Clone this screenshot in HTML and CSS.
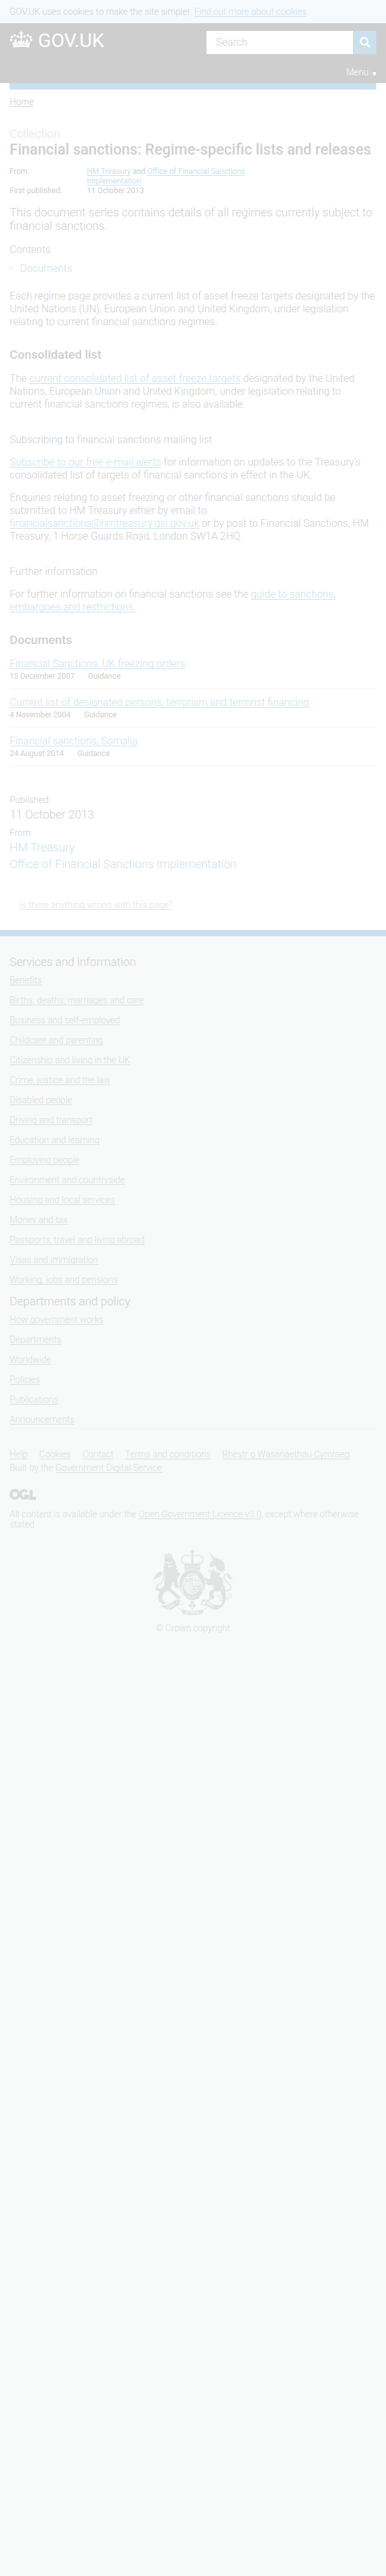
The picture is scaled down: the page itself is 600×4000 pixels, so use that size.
FILE: index.html
```html
<!DOCTYPE html>
<html lang="en">
<head>
<meta charset="utf-8">
<meta name="viewport" content="width=device-width, initial-scale=1">
<title>Financial sanctions: Regime-specific lists and releases - GOV.UK</title>
<link rel="stylesheet" href="styles.css">
</head>
<body>
<div class="cookie-bar">GOV.UK uses cookies to make the site simpler. <a href="#">Find out more about cookies</a></div>

<header class="site-header">
  <div class="header-row">
    <a class="logo" href="#">
      <svg class="crown" viewBox="0 0 108 80" aria-hidden="true">
        <g fill="currentColor">
          <path d="M51 2h6v6h6v6h-6v4l4 12-4 8h-6l-4-8 4-12v-4h-6V8h6z"/>
          <circle cx="38" cy="27" r="6"/><circle cx="70" cy="27" r="6"/>
          <circle cx="23" cy="21" r="6"/><circle cx="85" cy="21" r="6"/>
          <circle cx="10" cy="29" r="6"/><circle cx="98" cy="29" r="6"/>
          <circle cx="6" cy="43" r="6"/><circle cx="102" cy="43" r="6"/>
          <path d="M10 49l9 10 4-6-4-5 8-7 6 8-3 6 5 3 6-3-4-5 6-5 4 5h14l4-5 6 5-4 5 6 3 5-3-3-6 6-8 8 7-4 5 4 6 9-10-7 30Q54 74 17 79z"/>
          <rect x="25" y="38" width="5" height="22"/><rect x="51" y="40" width="6" height="20"/><rect x="78" y="38" width="5" height="22"/>
        </g>
        <path d="M21 68Q54 63 87 68" fill="none" stroke="#cecece" stroke-width="2"/>
        <path d="M35 63l5-3 4 3zM64 63l4-3 5 3z" fill="#cecece"/>
      </svg>
      <span>GOV.UK</span>
    </a>
    <form class="search" role="search">
      <input type="search" aria-label="Search" placeholder="Search">
      <button type="submit" aria-label="Search">
        <svg viewBox="0 0 18 18" aria-hidden="true"><circle cx="7" cy="7" r="5.5" fill="none" stroke="currentColor" stroke-width="2.5"/><path d="M11 11l5 5" stroke="currentColor" stroke-width="3"/></svg>
      </button>
    </form>
  </div>
  <a class="menu" href="#">Menu <svg viewBox="0 0 6 6" aria-hidden="true"><path d="M0 0h6L3.500 6h-1z" fill="currentColor"/></svg></a>
</header>

<main class="page">
  <div class="bar"></div>
  <nav class="crumbs" aria-label="Breadcrumb"><a href="#">Home</a></nav>

  <p class="kind">Collection</p>
  <h1>Financial sanctions: Regime-specific lists and releases</h1>
  <dl class="meta">
    <dt>From:</dt><dd><a href="#">HM Treasury</a> and <a href="#">Office of Financial Sanctions Implementation</a></dd>
    <dt>First published:</dt><dd>11 October 2013</dd>
  </dl>
  <p class="lead">This document series contains details of all regimes currently subject to financial sanctions.</p>

  <nav class="contents" aria-labelledby="contents-title">
    <h2 id="contents-title">Contents</h2>
    <ul><li><a href="#documents">Documents</a></li></ul>
  </nav>

  <section class="prose">
    <p>Each regime page provides a current list of asset freeze targets designated by the United Nations (UN), European Union and United Kingdom, under legislation relating to current financial sanctions regimes.</p>
    <h2>Consolidated list</h2>
    <p>The <a href="#">current consolidated list of asset freeze targets</a> designated by the United Nations, European Union and United Kingdom, under legislation relating to current&nbsp;financial sanctions regimes, is also available.</p>
    <h3>Subscribing to financial sanctions mailing list</h3>
    <p><a href="#">Subscribe to our free e-mail alerts</a> for information on updates to the Treasury’s consolidated list of targets of financial sanctions in effect in the UK.</p>
    <p>Enquiries relating to asset freezing or other financial sanctions should be submitted to HM Treasury either by email to <a href="#">financialsanctions@hmtreasury.gsi.gov.uk</a> or by post to Financial Sanctions, HM Treasury, 1 Horse Guards Road, London SW1A 2HQ.</p>
    <h3>Further information</h3>
    <p>For further information on financial sanctions see the <a href="#">guide to sanctions, embargoes and restrictions.</a></p>
    <h2 id="documents">Documents</h2>
  </section>

  <ol class="docs">
    <li><a href="#">Financial Sanctions, UK freezing orders</a><div class="doc-meta"><span>15 December 2007</span><span>Guidance</span></div></li>
    <li><a href="#">Current list of designated persons, terrorism and terrorist financing</a><div class="doc-meta"><span>4 November 2004</span><span>Guidance</span></div></li>
    <li><a href="#">Financial sanctions, Somalia</a><div class="doc-meta"><span>24 August 2014</span><span>Guidance</span></div></li>
  </ol>

  <dl class="published">
    <dt>Published:</dt><dd>11 October 2013</dd>
    <dt>From:</dt><dd><a href="#">HM Treasury</a></dd><dd><a href="#">Office of Financial Sanctions Implementation</a></dd>
  </dl>
  <p class="report"><a href="#">Is there anything wrong with this page?</a></p>
</main>

<footer class="footer">
  <nav class="footer-nav" aria-label="Footer">
    <h2>Services and information</h2>
    <ul>
      <li><a href="#">Benefits</a></li>
      <li><a href="#">Births, deaths, marriages and care</a></li>
      <li><a href="#">Business and self-employed</a></li>
      <li><a href="#">Childcare and parenting</a></li>
      <li><a href="#">Citizenship and living in the UK</a></li>
      <li><a href="#">Crime, justice and the law</a></li>
      <li><a href="#">Disabled people</a></li>
      <li><a href="#">Driving and transport</a></li>
      <li><a href="#">Education and learning</a></li>
      <li><a href="#">Employing people</a></li>
      <li><a href="#">Environment and countryside</a></li>
      <li><a href="#">Housing and local services</a></li>
      <li><a href="#">Money and tax</a></li>
      <li><a href="#">Passports, travel and living abroad</a></li>
      <li><a href="#">Visas and immigration</a></li>
      <li><a href="#">Working, jobs and pensions</a></li>
    </ul>
    <h2>Departments and policy</h2>
    <ul>
      <li><a href="#">How government works</a></li>
      <li><a href="#">Departments</a></li>
      <li><a href="#">Worldwide</a></li>
      <li><a href="#">Policies</a></li>
      <li><a href="#">Publications</a></li>
      <li><a href="#">Announcements</a></li>
    </ul>
  </nav>
  <ul class="support">
    <li><a href="#">Help</a></li>
    <li><a href="#">Cookies</a></li>
    <li><a href="#">Contact</a></li>
    <li><a href="#">Terms and conditions</a></li>
    <li><a href="#">Rhestr o Wasanaethau Cymraeg</a></li>
  </ul>
  <p class="built">Built by the <a href="#">Government Digital Service</a></p>
  <svg class="ogl" viewBox="0 0 123 51" role="img" aria-label="Open Government Licence">
    <g fill="none" stroke="currentColor">
      <circle cx="25" cy="25.500" r="18.500" stroke-width="14"/>
      <path d="M82 13A18.500 18.500 0 1 0 82 38V33H68" stroke-width="13"/>
    </g>
    <path d="M76 27h14v24l-8-6zM93 10l14-10v37h16v14H93z" fill="currentColor"/>
  </svg>
  <p class="licence">All content is available under the <a href="#">Open Government Licence v3.0</a>, except where otherwise stated</p>
  <a class="crest" href="#">
    <svg viewBox="24 20 376 308" aria-hidden="true">
      <defs>
        <path id="garter" d="M170 226A43 49 0 1 1 245 226"/>
        <path id="scroll-left" d="M90 300Q122 288 152 262"/>
        <path id="scroll-right" d="M262 268Q292 290 334 301"/>
      </defs>
      <g fill="currentColor">
        <!-- royal crown -->
        <path d="M203 20h9v6h5v9h-5v7h-9v-7h-5v-9h5z"/>
        <path d="M169 101q38-12 76 0l-2 18q-36-9-72 0z"/>
        <path d="M171 98l-5-18 8 7 5-9 5 10 7-6 2 14zM193 96l-2-12 9 5 7-14 7 14 9-5-2 12zM221 96l2-14 7 6 5-10 5 9 8-7-5 18z"/>
        <rect x="203" y="48" width="9" height="38"/>
      </g>
      <g fill="none" stroke="currentColor">
        <path d="M166 88C144 58 169 45 187 49Q201 52 207 44Q214 52 228 49C246 45 271 58 249 88" stroke-width="6" stroke-dasharray="5 2"/>
        <path d="M173 104q34-9 69 0" stroke="#f8faf9" stroke-width="2"/>
      </g>
      <!-- lion -->
      <g fill="currentColor">
        <path d="M77 54l-3-12 7 3 3-7 6 5 5-8 6 7 7-4 2 7 7-2-4 13q-18-4-36-2z"/>
        <path d="M76 58q20-6 38 0l8 12 8 12-3 9 8 10-4 7 9 8-1 9 12 8-6 12-8 18 4 23 9 14-8 3-7-8-2 12-9-15-6-20-11 24q1 13 14 19l19 17 13 9-6 11-17-4-13-16-22-18-20 7-9 21-1 15 19 14-8 8-13-5-6-9-7 3-1-17-4-14 6-12 6-20 18-15 4-40-5-20-4-18 7 3-8-18 8 3-4-17 7 2z"/>
      </g>
      <path d="M47 207C32 201 41 184 60 176C76 165 77 130 61 125C46 123 48 140 35 145" fill="none" stroke="currentColor" stroke-width="5"/>
      <path d="M25 163q5-27 23-36l20-2q-5 20-20 27-16 3-23 11zM32 203l13-3 19 7-13 10-14-5z" fill="currentColor"/>
      <path d="M84 83l9-2 5 6M103 80l9 1M94 96l10 3 7-4M98 101l2 8" fill="none" stroke="#f8faf9" stroke-width="4"/>
      <path d="M76 48q20-6 40 0" stroke="#f8faf9" stroke-width="2" fill="none"/>
      <!-- unicorn -->
      <g fill="currentColor">
        <path d="M282 26l33 38-9 6z"/>
        <path d="M290 99l-2-10 12-14 7-12 13-6 3 5 16 5 14 12 7 15-2 15 3 7-9 4-1 9-10-4-18-12-6-17-12 1-6 8z"/>
        <path d="M301 109l40 24-8 12-34-20z"/>
        <path d="M294 125l17 4 24 17 16 12-1 20 9 18 3 16 3 30-5 29-13 18-12 2 10-19 4-15-3-21-12-20-23 1-7 12 9 15-9 9-12 2-22 19-14-2 18-14 17-8-6-15 4-19 22-13-9-16-18 1-17-9 8-8-18-11-7-14-12-5-5-9 13-4 12 9 7 13 13 8 13 1 1-12z"/>
      </g>
      <path d="M305 113l5 10 5-5 4 9 6-4 4 9 5-4" fill="none" stroke="#f8faf9" stroke-width="2"/>
      <path d="M295 91l14-3M302 83l6-4" fill="none" stroke="#f8faf9" stroke-width="3"/>
      <path d="M353 208C365 220 385 213 389 199C389 185 367 175 360 162C349 144 365 126 379 143" fill="none" stroke="currentColor" stroke-width="5"/>
      <path d="M371 132q12 3 16 17l12 13q-22-1-26-13z" fill="currentColor"/>
      <g fill="none" stroke="currentColor" stroke-width="3">
        <circle cx="330" cy="239" r="6"/><circle cx="343" cy="254" r="7"/><circle cx="369" cy="252" r="6"/><circle cx="384" cy="240" r="8"/><circle cx="351" cy="175" r="5"/><circle cx="289" cy="121" r="6"/>
      </g>
      <circle cx="347" cy="200" r="4" fill="#f8faf9"/><circle cx="339" cy="221" r="4" fill="#f8faf9"/>
      <!-- shield and garter -->
      <ellipse cx="207" cy="182" rx="64" ry="72" fill="#f8faf9"/>
      <ellipse cx="207" cy="182" rx="51" ry="59" fill="none" stroke="currentColor" stroke-width="20"/>
      <ellipse cx="207" cy="182" rx="38" ry="45" fill="none" stroke="currentColor" stroke-width="2"/>
      <g fill="currentColor">
        <path d="M177 149l26-10v36h-34zM245 188l-6 24-26 10v-34z"/>
        <path d="M213 139l10 4v5h-7v4h14v-4l7 8 6 18h-30zM170 188h33v35q-25-7-33-35z" opacity=".5"/>
      </g>
      <path d="M169 154h31M171 165h29M216 200h26M216 211h25M182 146l12 27M222 191l10 24" stroke="#f8faf9" stroke-width="3"/>
      <path d="M178 191v20M184 191v26M190 191v29M196 191v30" stroke="#f8faf9" stroke-width="2"/>
      <path d="M207 140v85M168 182h78" stroke="currentColor" stroke-width="4"/>
      <text class="motto"><textPath href="#garter">HONI SOIT QUI MAL Y PENSE</textPath></text>
      <path d="M184 237q24 14 49-2l9 11q-34 23-65 2z" fill="currentColor"/>
      <g fill="#f8faf9"><circle cx="193" cy="244" r="3"/><circle cx="207" cy="247" r="3"/><circle cx="222" cy="243" r="3"/></g>
      <!-- rose and scrolls -->
      <path d="M199 264h16v7l-6 2v5q14-6 14 7 0 8-9 6l-7 14-7-14q-9 2-9-6 0-13 14-7v-5l-6-2z" fill="currentColor"/>
      <path d="M207 279v17M200 286h14" stroke="#f8faf9" stroke-width="2"/>
      <g fill="currentColor">
        <path d="M58 281q25 7 50-11 18-16 40-15l13 24-14 4q-15 2-35 17-17 7-32-1z"/>
        <path d="M255 255q22-1 40 16 19 13 58 10l-23 20q-20 6-43-10l-26-10-14-7z"/>
        <path d="M156 301q51 14 103 0l-4 20q-48 14-95 0z"/>
      </g>
      <path d="M146 264q17-2 16 10-1 9-14 6-13-2-12 7 2 11 20 16M268 264q-17-2-16 10 1 9 14 6 13-2 12 7-2 11-20 16" fill="#f8faf9" stroke="currentColor" stroke-width="3"/>
      <g class="scroll-text">
        <text><textPath href="#scroll-left">DIEU</textPath></text>
        <text x="207" y="322" text-anchor="middle">ET MON</text>
        <text><textPath href="#scroll-right">DROIT</textPath></text>
      </g>
    </svg>
    <span>© Crown copyright</span>
  </a>
</footer>
</body>
</html>
```
FILE: styles.css
```css
:root {
  --ink: #cecece;
  --link: #ccdfed;
  --muted: #e2e4e5;
  --footer-bg: #f8faf9;
  --footer-text: #dadcdb;
}
* { box-sizing: border-box; }
html { background: var(--footer-bg); }
body {
  margin: 0;
  font: 300 16px/20px Roboto, "Liberation Sans", sans-serif;
  color: var(--ink);
}
h1, h2, h3, p, dl, dd, ul, ol { margin: 0; padding: 0; }
ul, ol { list-style: none; }
a { color: var(--link); text-decoration-skip-ink: none; text-underline-offset: 2px; text-decoration-thickness: 1px; }

.cookie-bar { padding: 8px 15px; background: #f7fafd; font-size: 14px; }

.site-header { padding: 12px 15px 7px; background: var(--ink); }
.header-row { display: flex; justify-content: space-between; align-items: flex-start; }
.logo { display: flex; gap: 8px; color: #fff; font-size: 30px; font-weight: 400; line-height: 30px; text-decoration: none; }
.crown { width: 36px; height: 26px; }
.search { display: flex; gap: 1px; width: 264px; height: 36px; }
.search input {
  flex: 1; min-width: 0; padding: 0 15px; border: 0; border-radius: 0;
  background: #fff; font: inherit; color: var(--ink); appearance: none;
}
.search input::placeholder { color: var(--ink); opacity: 1; }
.search button {
  display: grid; place-items: center; width: 35px; padding: 0; border: 0;
  background: var(--link); color: #fff;
}
.search svg { width: 18px; height: 18px; }
.menu {
  display: flex; justify-content: flex-end; align-items: center; gap: 6px;
  margin-top: 18px; font-size: 14px; color: #fff; text-decoration: none;
}
.menu svg { width: 6px; height: 6px; margin-top: 6px; }

.page { padding: 0 15px 29px; background: #fff; }
.bar { height: 10px; background: var(--link); }
.crumbs { padding-top: 9px; font-size: 14px; }
.crumbs a { color: var(--ink); }

.kind { margin-top: 27px; font-size: 18px; line-height: 25px; color: var(--muted); }
h1 { font-size: 23px; line-height: 25px; font-weight: 500; }
.meta { display: grid; grid-template-columns: 120px 1fr; margin-top: 14px; font-size: 12px; line-height: 15px; font-weight: 400; }
.meta dd { max-width: 270px; }
.lead { margin-top: 15px; font-size: 18px; line-height: 21px; }

.contents { margin-top: 17px; }
.contents h2 { font-size: 16px; font-weight: 300; }
.contents ul { margin-top: 9px; }
.contents li { display: flex; }
.contents li::before { content: "-"; width: 16px; }
.contents a { text-decoration: none; }

.prose { padding-top: 23px; }
.prose h2 { margin-top: 28px; font-size: 19px; line-height: 25px; font-weight: 500; }
.prose h3 { margin-top: 35px; font-size: 16px; font-weight: 300; }
.prose p + p, .prose h2 + p, .prose h3 + p { margin-top: 15px; }

.docs { padding-top: 4px; }
.docs li { padding: 11px 0; border-bottom: 1px solid #f2f3f3; }
.doc-meta { display: flex; gap: 21px; margin-top: 2px; font-size: 12px; line-height: 15px; font-weight: 400; }

.published { padding-top: 42px; }
.published dt { font-size: 14px; }
.published dd { margin-bottom: 1px; font-size: 18px; line-height: 25px; }
.published dd + dt { margin-top: 6px; }
.published a { text-decoration: none; }
.report { padding: 40px 15px 0; font-size: 14px; }
.report a { color: var(--muted); }

.footer { padding: 27px 15px 60px; border-top: 10px solid var(--link); background: var(--footer-bg); color: var(--footer-text); font-size: 14px; }
.footer a { color: inherit; }
.footer-nav { padding-bottom: 4px; border-bottom: 1px solid #f2f3f3; }
.footer-nav h2 { margin-bottom: 6px; font-size: 18px; line-height: 25px; font-weight: 300; color: var(--ink); }
.footer-nav li { margin-bottom: 11px; }
.footer-nav ul:last-child li:last-child { margin-bottom: 0; }
.support { display: flex; flex-wrap: wrap; gap: 0 18px; margin-top: 29px; }
.built { margin-top: 1px; }
.ogl { display: block; width: 41px; height: 17px; margin-top: 23px; }
.licence { margin-top: 14px; line-height: 16px; }
.footer .crest { display: flex; flex-direction: column; align-items: center; gap: 10px; width: fit-content; margin: 31px auto 0; text-decoration: none; }
.crest svg { width: 125px; height: 102px; color: #e2e4e3; }
.motto, .scroll-text { fill: var(--footer-bg); font-weight: 700; }
.motto { font-size: 14px; }
.scroll-text { font-size: 17px; }
```
